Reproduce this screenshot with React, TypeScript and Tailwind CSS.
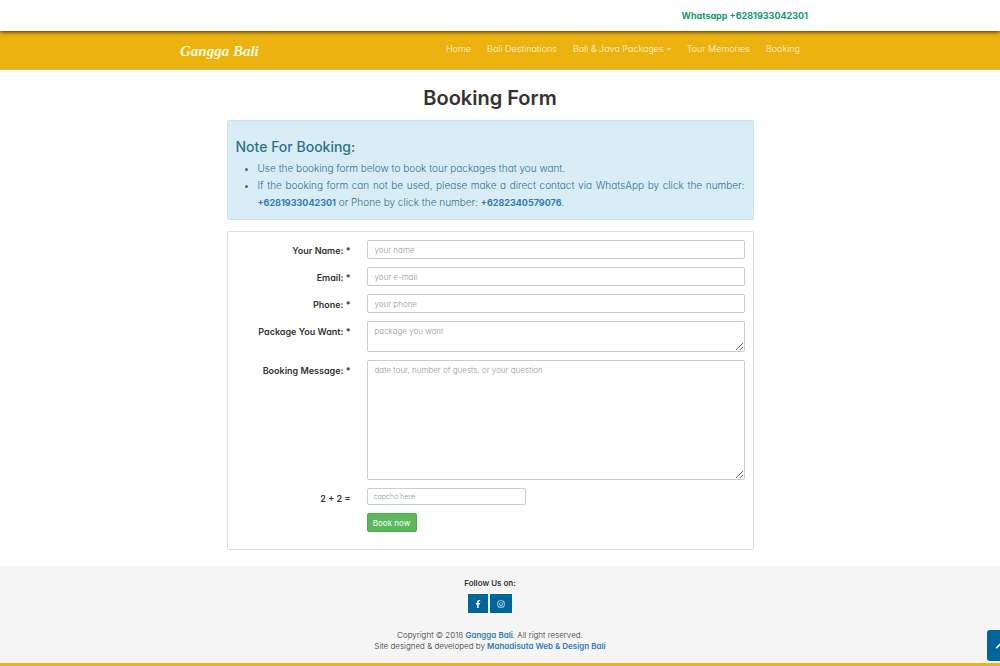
import { FaChevronUp, FaFacebookF, FaInstagram } from "react-icons/fa";

const field =
  "block w-full rounded-[2px] border border-[#cccccc] bg-white px-[7px] text-[8px] font-light text-[#555555] outline-none placeholder:text-[#999999] placeholder:opacity-100";
const label = "w-[115px] shrink-0 pt-[4px] text-right text-[9px] leading-[14px] font-semibold text-[#333333]";
const row = "flex gap-4";
const footerLink = "font-semibold text-[#337ab7]";
const noteLink = "text-[9px] font-bold text-[#337ab7]";

const links = ["Home", "Bali Destinations", "Bali & Java Packages", "Tour Memories", "Booking"];

function Header() {
  return (
    <header>
      <div className="relative h-[31px] bg-white pr-5 shadow-[0_1px_4px_rgba(0,0,0,0.75)]">
        <div className="mx-auto flex h-full max-w-[636px] items-center justify-end">
          <a href="#whatsapp" className="text-[9px] font-bold text-[#129a68]">
            Whatsapp +6281933042301
          </a>
        </div>
      </div>
      <nav className="h-[39px] border-b border-[#d6bd62] bg-[#ecb20f] pr-5">
        <div className="mx-auto flex h-[36px] max-w-[636px] items-center justify-between px-2">
          <a
            href="#top"
            className="pt-[3px] font-['Liberation_Serif',serif] text-[15px] leading-5 font-bold text-[#fffbe0] italic"
          >
            Gangga Bali
          </a>
          <ul className="flex gap-4 text-[9px] font-light whitespace-nowrap text-[#fff8dc]">
            {links.map((text) => (
              <li key={text}>
                <a href="#nav" className="flex items-center gap-[3px]">
                  {text}
                  {text.includes("Java") && (
                    <span className="border-x-2 border-t-2 border-x-transparent border-t-[#fff8dc]" />
                  )}
                </a>
              </li>
            ))}
          </ul>
        </div>
      </nav>
    </header>
  );
}

function Note() {
  return (
    <section className="rounded-[2px] border border-[#c5e6ee] bg-[#d9edf7] px-2 pt-4 pb-[8px] text-[#31708f]">
      <h2 className="text-[14px] leading-5 font-medium">Note For Booking:</h2>
      <ul className="mt-[3px] list-disc pl-[22px] text-justify text-[10px] leading-[17px] font-light">
        <li>Use the booking form below to book tour packages that you want.</li>
        <li>
          If the booking form can not be used, please make a direct contact via WhatsApp by click the number:{" "}
          <a href="#whatsapp" className={noteLink}>+6281933042301</a> or Phone by click the number:{" "}
          <a href="#phone" className={noteLink}>+6282340579076</a>.
        </li>
      </ul>
    </section>
  );
}

function BookingForm() {
  return (
    <form
      className="mt-[11px] flex flex-col gap-2 rounded-[2px] border border-[#dddddd] px-2 pt-2 pb-[17px]"
      onSubmit={(e) => e.preventDefault()}
    >
      <div className={row}>
        <label htmlFor="name" className={label}>Your Name: *</label>
        <input id="name" type="text" placeholder="your name" className={`${field} h-[19px]`} />
      </div>
      <div className={row}>
        <label htmlFor="email" className={label}>Email: *</label>
        <input id="email" type="email" placeholder="your e-mail" className={`${field} h-[19px]`} />
      </div>
      <div className={row}>
        <label htmlFor="phone" className={label}>Phone: *</label>
        <input id="phone" type="tel" placeholder="your phone" className={`${field} h-[19px]`} />
      </div>
      <div className={row}>
        <label htmlFor="package" className={label}>Package You Want: *</label>
        <textarea id="package" placeholder="package you want" className={`${field} h-[31px] py-[3px] leading-[12px]`} />
      </div>
      <div className={row}>
        <label htmlFor="message" className={label}>Booking Message: *</label>
        <textarea
          id="message"
          placeholder="date tour, number of guests, or your question"
          className={`${field} h-[120px] py-[3px] leading-[12px]`}
        />
      </div>
      <div className={row}>
        <label htmlFor="captcha" className={label}>2 + 2 =</label>
        <div className="flex-1">
          <input
            id="captcha"
            type="text"
            placeholder="capcha here"
            className="block h-[17px] w-[159px] rounded-[2px] border border-[#cccccc] px-[6px] text-[7px] font-light outline-none placeholder:text-[#999999] placeholder:opacity-100"
          />
          <button
            type="submit"
            className="mt-2 block h-[19px] w-[50px] rounded-[2px] border border-[#4cae4c] bg-[#5cb85c] text-[8px] whitespace-nowrap text-white"
          >
            Book now
          </button>
        </div>
      </div>
    </form>
  );
}

function Footer() {
  return (
    <footer className="relative mt-4 overflow-hidden border-b-[3px] border-[#e9b322] bg-[#f5f5f5] pt-[11px] pr-5 pb-[11px] text-center text-[#333333]">
      <h3 className="text-[8px] leading-[12px] font-semibold">Follow Us on:</h3>
      <div className="mt-[5px] flex justify-center gap-[2px] text-[8px] text-white">
        <a href="#facebook" aria-label="Facebook" className="flex h-[19px] w-[20px] items-center justify-center bg-[#006699]">
          <FaFacebookF />
        </a>
        <a href="#instagram" aria-label="Instagram" className="flex h-[19px] w-[22px] items-center justify-center bg-[#006699]">
          <FaInstagram />
        </a>
      </div>
      <p className="mt-[17px] text-[8px] leading-[11px] font-light">
        Copyright © 2018 <a href="#home" className={footerLink}>Gangga Bali</a>. All right reserved.
        <br />
        Site designed &amp; developed by <a href="#studio" className={footerLink}>Mahadisuta Web &amp; Design Bali</a>
      </p>
      <a
        href="#top"
        aria-label="Back to top"
        className="absolute -right-[13px] bottom-[2px] flex h-[31px] w-[26px] items-center justify-center rounded-[3px] bg-[#006699] text-[10px] text-white"
      >
        <FaChevronUp />
      </a>
    </footer>
  );
}

export default function App() {
  return (
    <div className="overflow-x-hidden bg-white font-['Inter','Open_Sans',sans-serif] [font-feature-settings:'cv11']">
      <Header />
      <main className="pr-5">
        <div className="mx-auto max-w-[527px]">
          <h1 className="pt-[14px] pb-[8px] text-center text-[20px] leading-7 font-semibold text-[#333333]">
            Booking Form
          </h1>
          <Note />
          <BookingForm />
        </div>
      </main>
      <Footer />
    </div>
  );
}
